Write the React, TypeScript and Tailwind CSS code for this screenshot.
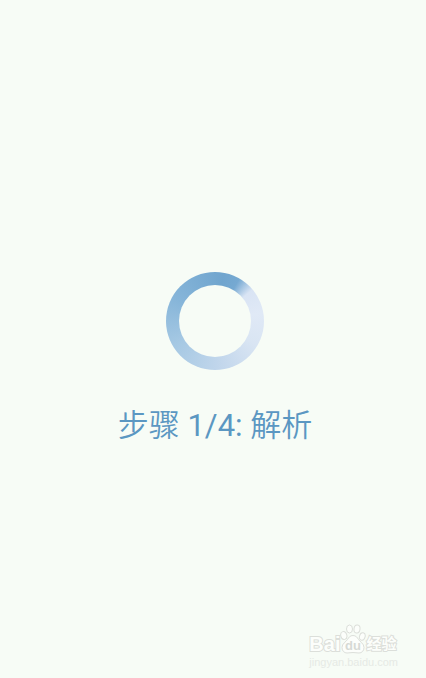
const Spinner = () => (
  <div
    role="progressbar"
    aria-valuemin={0}
    aria-valuemax={4}
    aria-valuenow={1}
    className="size-[98px] rounded-full bg-[conic-gradient(from_50deg,#d9e4f4_0deg,#e0e9f6_30deg,#d9e5f3_70deg,#c3d7ec_120deg,#a5c8e3_190deg,#86b5d9_250deg,#70a5ce_320deg,#76a9d2_340deg,#d9e4f4_360deg)] p-[13px]"
  >
    <div className="size-full rounded-full bg-[#f7fcf6]" />
  </div>
);

const Paw = () => (
  <svg viewBox="0 0 26 30" className="h-[30px] w-[26px] fill-[#fcfefb] stroke-[#dcdfda] [paint-order:normal]">
    <ellipse cx="9.5" cy="5" rx="3" ry="4" />
    <ellipse cx="17" cy="5" rx="3" ry="4" transform="rotate(8 17 5)" />
    <ellipse cx="3.8" cy="11.5" rx="3" ry="4" transform="rotate(-15 3.8 11.5)" />
    <ellipse cx="22.3" cy="12.5" rx="2.8" ry="3.8" transform="rotate(15 22.3 12.5)" />
    <path d="M13 11.5c-3 0-4.300 2-5.500 4-1.500 2.400-5.500 4-5.500 8 0 3.500 2.300 5.500 5 5.500 2.200 0 3.800-.5 6-.5s3.800.5 6 .5c2.700 0 5-2 5-5.500 0-4-4-5.600-5.500-8-1.200-2-2.500-4-5.500-4z" />
    <text
      x="13"
      y="26"
      textAnchor="middle"
      className="fill-[#d6dad5] stroke-none font-['Liberation_Sans',sans-serif] text-[13px] font-bold"
    >
      du
    </text>
  </svg>
);

const Watermark = () => (
  <div className="absolute right-7 bottom-2 font-['Liberation_Sans','Noto_Sans_CJK_SC',sans-serif] text-[#fcfefb]">
    <div className="flex items-end font-bold [-webkit-text-stroke:2px_#dcdfda] [paint-order:stroke]">
      <span className="text-[20px] leading-5">Bai</span>
      <Paw />
      <span className="text-[15px] leading-5">经验</span>
    </div>
    <div className="text-[11px] leading-4 text-[#e6eae5]">jingyan.baidu.com</div>
  </div>
);

const App = () => {
  return (
    <main className="relative flex min-h-screen flex-col items-center justify-center gap-9 bg-[#f7fcf6] pt-10 pl-1">
      <Spinner />
      <p className="font-['Roboto','Noto_Sans_CJK_SC',sans-serif] text-[31px] leading-10 font-[350] text-[#5b97c2]">
        步骤 <span className="font-normal">1/4:</span> 解析
      </p>
      <Watermark />
    </main>
  );
};

export default App;
